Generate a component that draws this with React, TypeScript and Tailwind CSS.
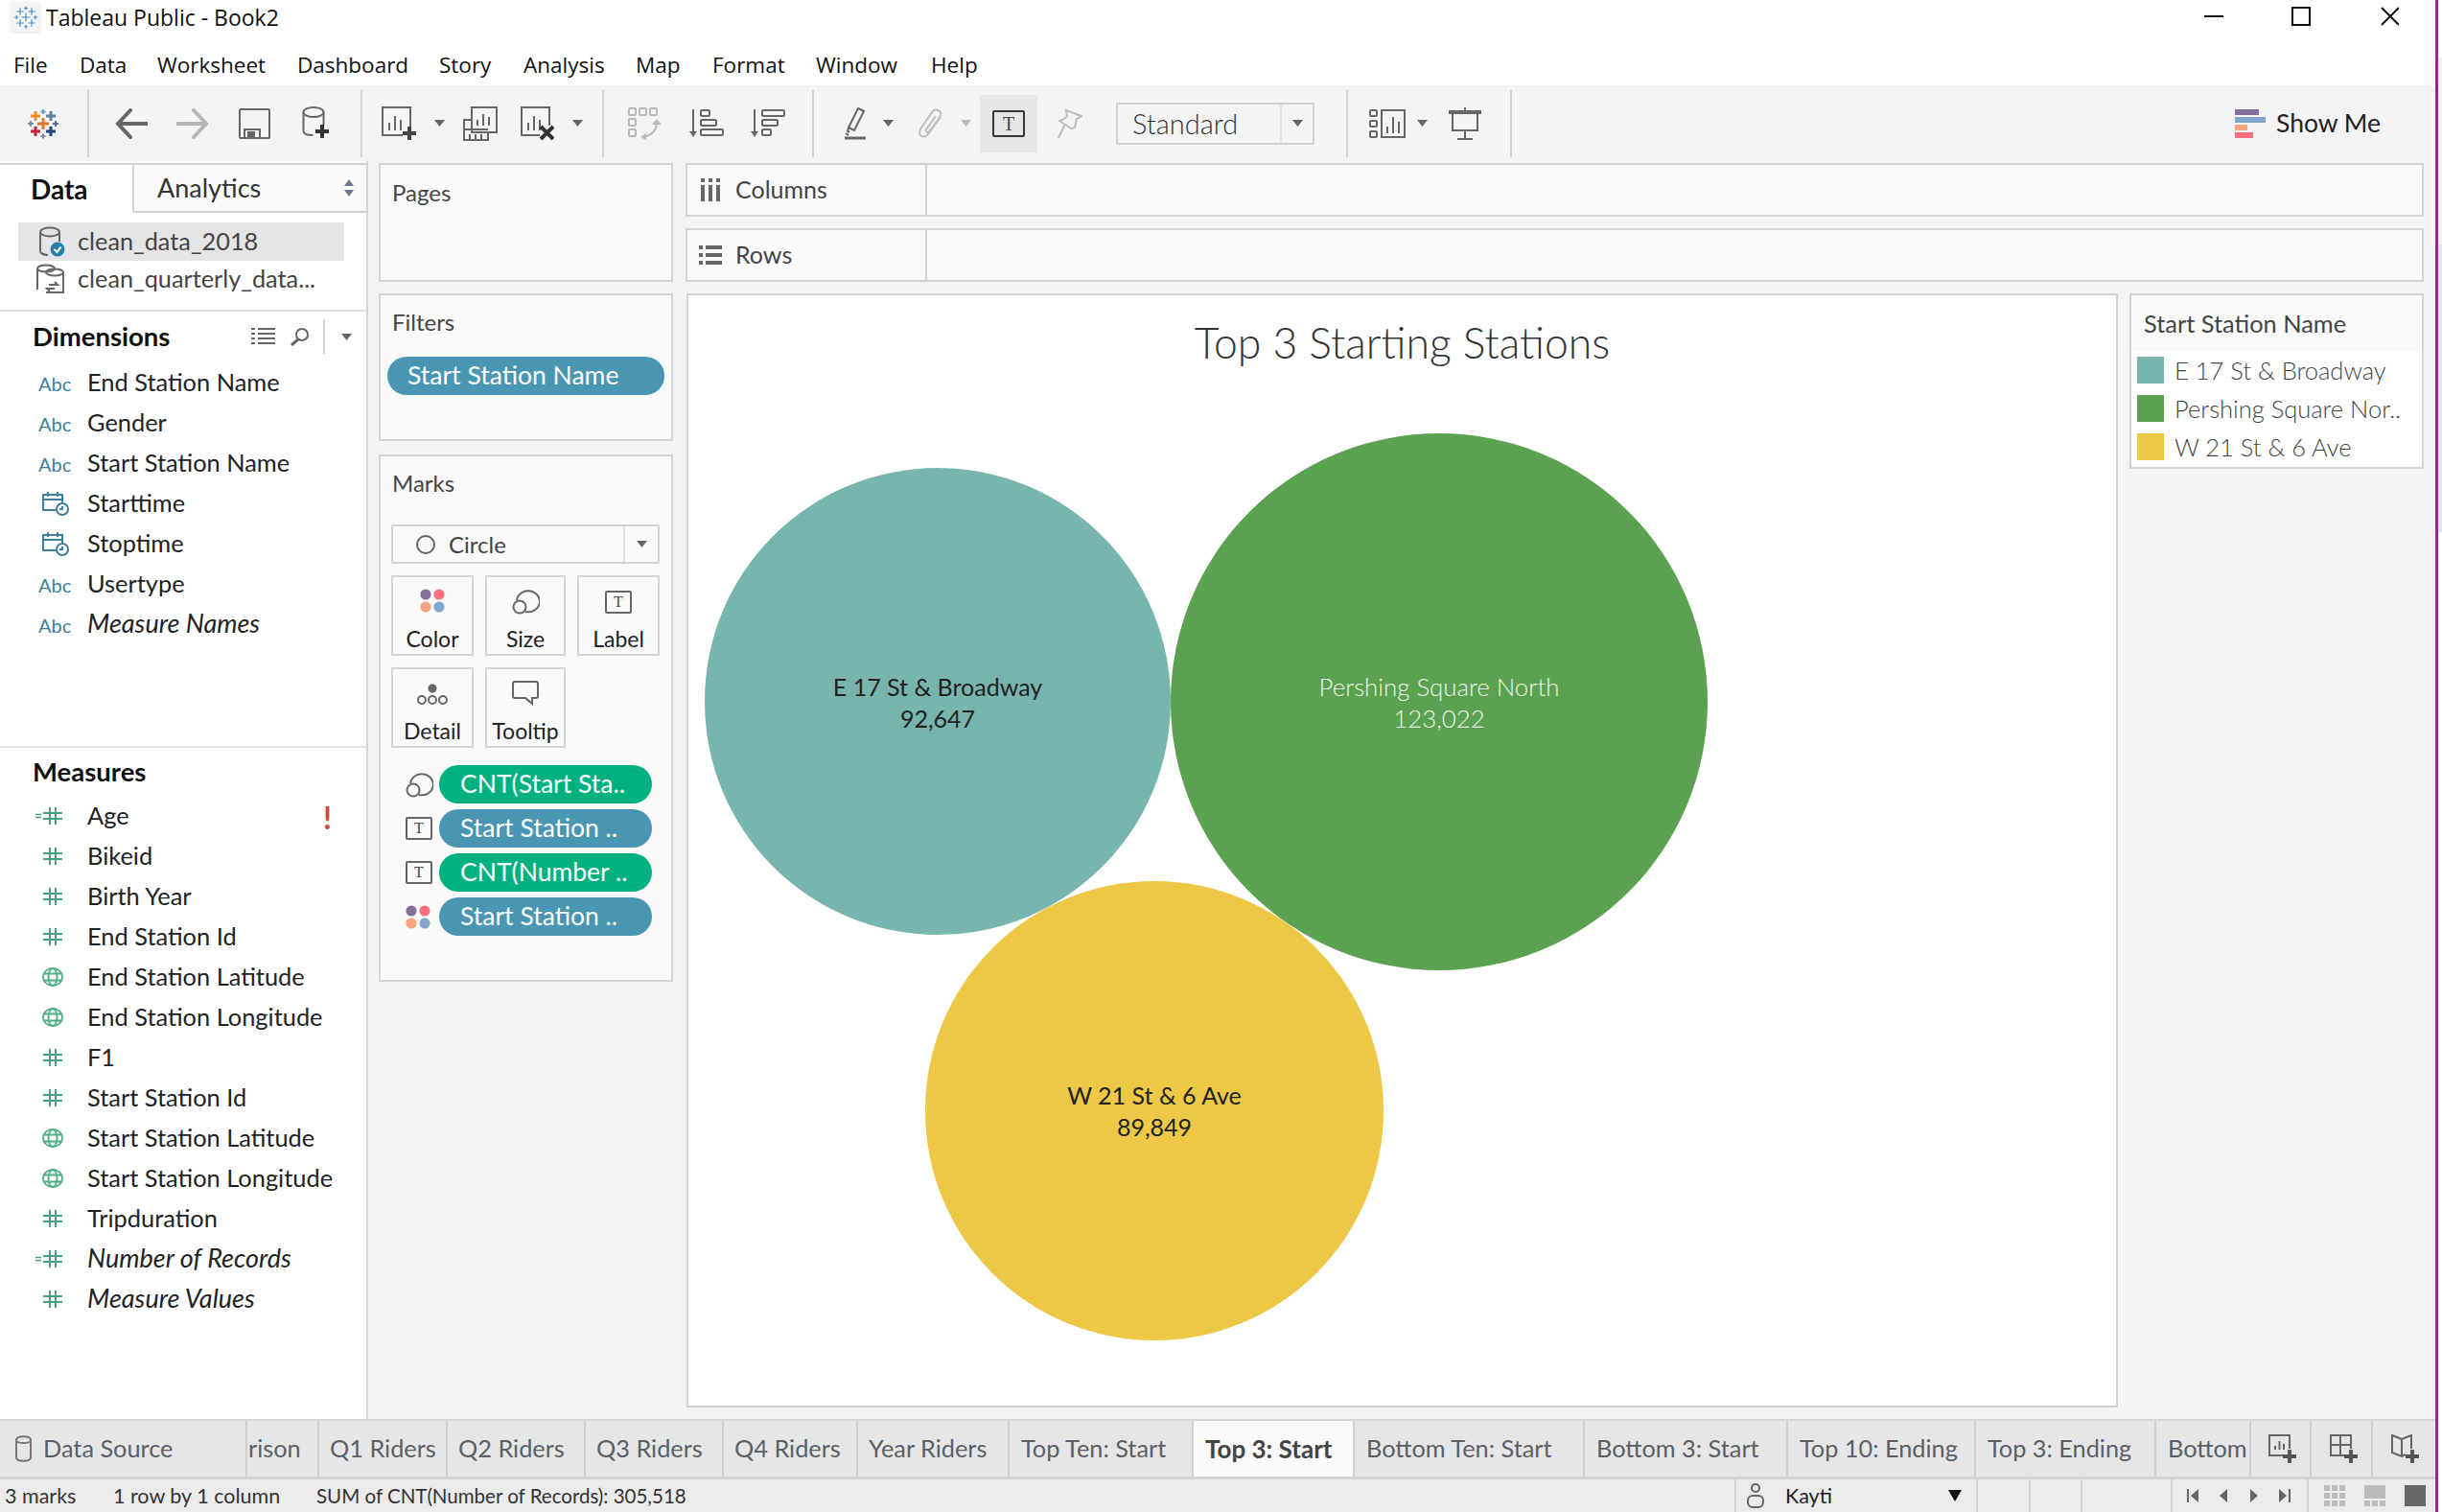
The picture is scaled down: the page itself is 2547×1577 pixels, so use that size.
import React from "react";

// Toolbar icons
const Sep = ({ className }: { className: string }) => (
  <div className={`w-[2px] h-[70px] bg-[#d4d4d4] shrink-0 ${className}`} />
);

const Caret = ({ className, light }: { className: string; light?: boolean }) => (
  <svg className={`shrink-0 ${className}`} width="11" height="7" viewBox="0 0 11 7">
    <path d="M0 0h11L5.5 7z" fill={light ? "#b9b9b9" : "#666"} />
  </svg>
);

const Plus = ({ x, y, s = 14, w = 4, color = "#555" }: { x: number; y: number; s?: number; w?: number; color?: string }) => (
  <path d={`M${x - s / 2} ${y}h${s}M${x} ${y - s / 2}v${s}`} stroke={color} strokeWidth={w} fill="none" />
);

const TableauLogo = ({ className, mono }: { className: string; mono?: boolean }) => {
  const crosses: [number, number, number, number, string][] = [
    [16, 16, 12, 3, "#e8762d"],
    [16, 3.5, 5, 2, "#6f9fb3"],
    [8, 8, 10, 3, "#eb912b"],
    [24, 8, 10, 3, "#5b879b"],
    [3, 16, 6, 2, "#7099a6"],
    [29, 16, 6, 2, "#59629b"],
    [8, 24, 10, 3, "#c72035"],
    [24, 24, 10, 3, "#1f447a"],
    [16, 29, 5, 2, "#7e8faf"],
  ];
  return (
    <svg className={`shrink-0 ${className}`} viewBox="0 0 32 32">
      {crosses.map(([x, y, s, w, c], i) => (
        <path key={i} d={`M${x - s / 2} ${y}h${s}M${x} ${y - s / 2}v${s}`} stroke={mono ? "#4a90c2" : c} strokeWidth={mono ? 1.6 : w} fill="none" />
      ))}
    </svg>
  );
};

const SheetBars = ({ x, y }: { x: number; y: number }) => (
  <path d={`M${x} ${y + 17}v-8M${x + 6} ${y + 17}v-15M${x + 12} ${y + 17}v-11`} stroke="#666" strokeWidth="2" fill="none" />
);

const TBox = ({ className }: { className: string }) => (
  <div className={`border-2 border-[#666] rounded-[2px] flex items-center justify-center text-[#444] [font-family:'Liberation_Serif',serif] leading-none shrink-0 ${className}`}>
    T
  </div>
);

const SizeIcon = ({ className }: { className: string }) => (
  <svg className={`shrink-0 ${className}`} width="29" height="27" viewBox="0 0 29 27" fill="none" stroke="#666" strokeWidth="2">
    <path d="M5 12a12 11 0 1 1 9 12" />
    <circle cx="8" cy="19" r="6.5" />
  </svg>
);

const ColorDots = ({ className }: { className: string }) => (
  <svg className={`shrink-0 ${className}`} width="26" height="25" viewBox="0 0 26 25">
    <circle cx="6" cy="6" r="5.6" fill="#84709a" />
    <circle cx="20" cy="6" r="5.6" fill="#f76e7e" />
    <circle cx="6" cy="19" r="5.6" fill="#f4a57f" />
    <circle cx="20" cy="19" r="5.6" fill="#82a5ce" />
  </svg>
);

const FieldIcon = ({ type }: { type: string }) => {
  if (type === "abc")
    return <span className="ml-[40px] mt-[4px] text-[20px] text-[#3d7f9e] leading-none">Abc</span>;
  if (type === "date")
    return (
      <svg className="ml-[44px] mt-[2px]" width="29" height="26" viewBox="0 0 29 26" fill="none" stroke="#3d7f9e" strokeWidth="2">
        <path d="M15 20H1V4h20v8M1 9h20M6 1v5M16 1v5" />
        <circle cx="21" cy="19" r="6" fill="#fff" />
        <path d="M21 16v3h-3" />
      </svg>
    );
  if (type === "globe")
    return (
      <svg className="ml-[44px] mt-[2px]" width="22" height="20" viewBox="0 0 22 20" fill="none" stroke="#4fae88" strokeWidth="1.8">
        <ellipse cx="11" cy="10" rx="10" ry="9" />
        <ellipse cx="11" cy="10" rx="4.5" ry="9" />
        <path d="M2 6.5h18M2 13.5h18" />
      </svg>
    );
  if (type === "calc")
    return (
      <svg className="ml-[37px] mt-[2px]" width="28" height="18" viewBox="0 0 28 18" fill="none" stroke="#4a9f80" strokeWidth="2">
        <path d="M0 7.5h6M0 10.5h6" strokeWidth="1.5" />
        <path d="M15 0v18M21 0v18M8 6h20M8 12h20" />
      </svg>
    );
  return (
    <svg className="ml-[45px] mt-[2px]" width="20" height="18" viewBox="0 0 20 18" fill="none" stroke="#4a9f80" strokeWidth="2">
      <path d="M7 0v18M13 0v18M0 6h20M0 12h20" />
    </svg>
  );
};

const dimensions = [
  { name: "End Station Name", type: "abc" },
  { name: "Gender", type: "abc" },
  { name: "Start Station Name", type: "abc" },
  { name: "Starttime", type: "date" },
  { name: "Stoptime", type: "date" },
  { name: "Usertype", type: "abc" },
  { name: "Measure Names", type: "abc", italic: true },
];

const measures = [
  { name: "Age", type: "calc", warn: true },
  { name: "Bikeid", type: "hash" },
  { name: "Birth Year", type: "hash" },
  { name: "End Station Id", type: "hash" },
  { name: "End Station Latitude", type: "globe" },
  { name: "End Station Longitude", type: "globe" },
  { name: "F1", type: "hash" },
  { name: "Start Station Id", type: "hash" },
  { name: "Start Station Latitude", type: "globe" },
  { name: "Start Station Longitude", type: "globe" },
  { name: "Tripduration", type: "hash" },
  { name: "Number of Records", type: "calc", italic: true },
  { name: "Measure Values", type: "hash", italic: true },
];

const FieldRow = ({ field }: { field: { name: string; type: string; italic?: boolean; warn?: boolean } }) => (
  <div className="relative h-[42px] flex items-center text-[25.4px] text-[#222]">
    <div className="w-[91px] shrink-0 flex items-center">
      <FieldIcon type={field.type} />
    </div>
    <span className={field.italic ? "italic text-[27px]" : ""}>{field.name}</span>
    {field.warn && <span className="absolute left-[337px] top-[0px] text-[32px] font-bold text-[#d2483c]">!</span>}
  </div>
);

const menus = [
  { label: "File", className: "w-[69px]" },
  { label: "Data", className: "w-[81px]" },
  { label: "Worksheet", className: "w-[146px]" },
  { label: "Dashboard", className: "w-[148px]" },
  { label: "Story", className: "w-[88px]" },
  { label: "Analysis", className: "w-[117px]" },
  { label: "Map", className: "w-[80px]" },
  { label: "Format", className: "w-[108px]" },
  { label: "Window", className: "w-[120px]" },
  { label: "Help", className: "w-[60px]" },
];

const tabs = [
  { label: "rison", className: "w-[75px] pl-[1px]" },
  { label: "Q1 Riders", className: "w-[134px] pl-[11px]" },
  { label: "Q2 Riders", className: "w-[144px] pl-[11px]" },
  { label: "Q3 Riders", className: "w-[144px] pl-[11px]" },
  { label: "Q4 Riders", className: "w-[140px] pl-[11px]" },
  { label: "Year Riders", className: "w-[158px] pl-[11px]" },
  { label: "Top Ten: Start", className: "w-[192px] pl-[12px]" },
  { label: "Top 3: Start", className: "w-[168px] pl-[12px] bg-[#fafafa] font-bold text-[#444] text-[26px]" },
  { label: "Bottom Ten: Start", className: "w-[240px] pl-[12px]" },
  { label: "Bottom 3: Start", className: "w-[212px] pl-[12px]" },
  { label: "Top 10: Ending", className: "w-[196px] pl-[12px]" },
  { label: "Top 3: Ending", className: "w-[188px] pl-[12px]" },
  { label: "Bottom", className: "w-[99px] pl-[12px]" },
];

const MarkCard = ({ label, className, children }: { label: string; className: string; children: React.ReactNode }) => (
  <div className={`h-[84px] border-2 border-[#d4d4d4] flex flex-col items-center text-[23px] text-[#222] ${className}`}>
    <div className="h-[40px] mt-[12px] flex items-start justify-center">{children}</div>
    <span className="leading-[24px]">{label}</span>
  </div>
);

const MarkPill = ({ icon, label, color }: { icon: React.ReactNode; label: string; color: string }) => (
  <div className="h-[40px] flex items-center">
    <div className="w-[50px] pl-[15px] flex items-center">{icon}</div>
    <div className={`w-[222px] h-[40px] rounded-full pl-[22px] flex items-center text-white text-[26.5px] whitespace-nowrap ${color}`}>{label}</div>
  </div>
);

export default function App() {
  return (
    <div className="w-[2547px] h-[1577px] flex overflow-hidden bg-white [font-family:Lato,sans-serif]">
      <div className="w-[2540px] h-full flex flex-col shrink-0">
        {/* Title bar */}
        <div className="h-[45px] flex items-start pt-[2px] [font-family:'Open_Sans',sans-serif] text-[23px] leading-[30px] text-[#111]">
          <div className="ml-[11px] w-[31px] h-[31px] bg-[#f4f4f4] shadow-sm flex items-center justify-center">
            <TableauLogo className="w-[24px] h-[24px]" mono />
          </div>
          <span className="ml-[6px] pt-[1px]">Tableau Public - Book2</span>
          <svg className="ml-auto mr-[38px] mt-[4px]" width="203" height="22" viewBox="0 0 203 22" fill="none" stroke="#111" strokeWidth="2">
            <path d="M0 11h20" />
            <rect x="92" y="2" width="18" height="18" />
            <path d="M185 2l18 18M203 2l-18 18" />
          </svg>
        </div>

        {/* Menu */}
        <div className="h-[44px] flex items-center pl-[14px] pt-[2px] [font-family:'Open_Sans',sans-serif] text-[22.5px] text-[#111]">
          {menus.map((m) => (
            <span key={m.label} className={m.className}>{m.label}</span>
          ))}
        </div>

        {/* Toolbar */}
        <div className="h-[79px] bg-[#f4f4f4] flex items-center">
          <TableauLogo className="ml-[29px] w-[32px] h-[32px]" />
          <Sep className="ml-[30px]" />
          <svg className="ml-[27px] shrink-0" width="34" height="32" viewBox="0 0 34 32" fill="none" stroke="#666" strokeWidth="4" strokeLinecap="round">
            <path d="M33 16H3M16 2L3 16l13 14" />
          </svg>
          <svg className="ml-[30px] shrink-0" width="34" height="32" viewBox="0 0 34 32" fill="none" stroke="#b7b7b7" strokeWidth="4" strokeLinecap="round">
            <path d="M1 16h30M18 2l13 14-13 14" />
          </svg>
          <svg className="ml-[31px] shrink-0" width="33" height="32" viewBox="0 0 33 32" fill="none" stroke="#666" strokeWidth="2">
            <rect x="1" y="1" width="31" height="30" rx="1" />
            <path d="M6 31V22h16v9" />
            <rect x="10" y="25" width="6" height="6" fill="#666" />
          </svg>
          <svg className="ml-[33px] shrink-0" width="29" height="35" viewBox="0 0 29 35" fill="none" stroke="#666" strokeWidth="2">
            <ellipse cx="12" cy="6" rx="10.5" ry="5" />
            <path d="M1.5 6v20c0 3 4 4 10 4M22.5 6v14" />
            <Plus x={21} y={26} s={14} w={4} color="#333" />
          </svg>
          <Sep className="ml-[32px]" />
          <svg className="ml-[20px] shrink-0" width="37" height="36" viewBox="0 0 37 36" fill="none" stroke="#666" strokeWidth="2">
            <path d="M22 30H1V1h29v21" />
            <SheetBars x={8} y={8} />
            <Plus x={29} y={28} s={14} w={4} color="#444" />
          </svg>
          <Caret className="ml-[18px]" />
          <svg className="ml-[19px] shrink-0" width="36" height="36" viewBox="0 0 36 36" fill="none" stroke="#666" strokeWidth="2">
            <rect x="9" y="1" width="26" height="26" />
            <path d="M9 14H1v21h25v-8M1 24h25" />
            <path d="M15 20v-6M21 20V8M27 20V11M7 29v5M13 29v5M19 29v5" />
          </svg>
          <svg className="ml-[24px] shrink-0" width="37" height="36" viewBox="0 0 37 36" fill="none" stroke="#666" strokeWidth="2">
            <path d="M20 30H1V1h29v19" />
            <SheetBars x={8} y={8} />
            <path d="M21 21l13 13M34 21L21 34" stroke="#333" strokeWidth="4" />
          </svg>
          <Caret className="ml-[17px]" />
          <Sep className="ml-[20px]" />
          <svg className="ml-[25px] shrink-0" width="36" height="34" viewBox="0 0 36 34" fill="none" stroke="#b9b9b9" strokeWidth="2">
            <rect x="1" y="1" width="7" height="7" rx="1" />
            <rect x="12" y="1" width="7" height="7" rx="1" />
            <rect x="23" y="1" width="7" height="7" rx="1" />
            <rect x="1" y="12" width="7" height="7" rx="1" />
            <rect x="1" y="23" width="7" height="7" rx="1" />
            <path d="M30 17c0 6-5 12-14 14" />
            <path d="M25 18l5-6 5 6zM19 27l-6 4 6 3z" fill="#b9b9b9" stroke="none" />
          </svg>
          <svg className="ml-[28px] shrink-0" width="36" height="30" viewBox="0 0 36 30" fill="none" stroke="#666" strokeWidth="2">
            <path d="M4 0v26" />
            <path d="M0 23h8l-4 6z" fill="#666" stroke="none" />
            <rect x="12" y="1" width="9" height="6" rx="1" />
            <rect x="12" y="11" width="16" height="6" rx="1" />
            <rect x="12" y="21" width="23" height="6" rx="1" />
          </svg>
          <svg className="ml-[28px] shrink-0" width="36" height="30" viewBox="0 0 36 30" fill="none" stroke="#666" strokeWidth="2">
            <path d="M4 0v26" />
            <path d="M0 23h8l-4 6z" fill="#666" stroke="none" />
            <rect x="12" y="1" width="23" height="6" rx="1" />
            <rect x="12" y="11" width="16" height="6" rx="1" />
            <rect x="12" y="21" width="9" height="6" rx="1" />
          </svg>
          <Sep className="ml-[28px]" />
          <svg className="ml-[32px] shrink-0" width="23" height="34" viewBox="0 0 23 34" fill="none" stroke="#666" strokeWidth="2">
            <path d="M14 1l6 3-10 20-6-3zM4 21l-1 4 2 1" />
            <path d="M1 27l3 2" />
            <path d="M0 32h22" strokeWidth="3" />
          </svg>
          <Caret className="ml-[17px]" />
          <svg className="ml-[25px] shrink-0" width="27" height="32" viewBox="0 0 27 32" fill="none" stroke="#bdbdbd" strokeWidth="2">
            <path d="M24 9L11 27c-3 4-9 3-9-2 0-2 1-3 2-5L16 3c3-3 9-1 8 4-1 3-10 15-12 17-2 2-4 0-3-2L19 8" />
          </svg>
          <Caret className="ml-[18px]" light />
          <div className="ml-[9px] w-[60px] h-[60px] bg-[#e6e6e6] flex items-center justify-center shrink-0">
            <div className="w-[34px] h-[28px] border-2 border-[#333] rounded-[2px] flex items-center justify-center [font-family:'Liberation_Serif',serif] text-[20px] text-[#444] leading-none">T</div>
          </div>
          <svg className="ml-[21px] shrink-0" width="26" height="32" viewBox="0 0 26 32" fill="none" stroke="#bdbdbd" strokeWidth="2">
            <path d="M9 2l16 6-5 3-2 9-4 1L2 13l5-2 3-3zM7 18L1 31" />
          </svg>
          <div className="ml-[35px] w-[207px] h-[44px] border-2 border-[#d0d0d0] rounded-[2px] flex items-center shrink-0">
            <span className="w-[169px] pl-[15px] text-[29px] text-[#333] font-light">Standard</span>
            <div className="w-[34px] h-full border-l-2 border-[#e2e2e2] flex items-center justify-center">
              <Caret className="" />
            </div>
          </div>
          <Sep className="ml-[33px]" />
          <svg className="ml-[22px] shrink-0" width="38" height="30" viewBox="0 0 38 30" fill="none" stroke="#666" strokeWidth="2">
            <rect x="1" y="1" width="7" height="6" rx="1" />
            <rect x="1" y="12" width="7" height="6" rx="1" />
            <rect x="1" y="23" width="7" height="6" rx="1" />
            <rect x="13" y="1" width="24" height="28" />
            <path d="M19 25v-7M25 25V8M31 25V13" />
          </svg>
          <Caret className="ml-[12px]" />
          <svg className="ml-[22px] shrink-0" width="34" height="34" viewBox="0 0 34 34" fill="none" stroke="#666" strokeWidth="2">
            <path d="M17 0v4M4 5v19h26V5M17 24v8M9 33h16" />
            <path d="M0 5h34" strokeWidth="4" />
          </svg>
          <Sep className="ml-[30px]" />
          <div className="ml-auto mr-[57px] flex items-center">
            <svg width="32" height="30" viewBox="0 0 32 30">
              <rect width="25" height="6" fill="#84709a" />
              <rect y="8" width="32" height="6" fill="#82a5ce" />
              <rect y="16" width="13" height="6" fill="#f4a57f" />
              <rect y="24" width="19" height="6" fill="#f76e7e" />
            </svg>
            <span className="ml-[11px] text-[26.5px] text-[#222]">Show Me</span>
          </div>
        </div>

        {/* Work area */}
        <div className="flex-1 flex bg-[#f4f4f4] min-h-0">
          {/* Data pane */}
          <div className="w-[384px] shrink-0 bg-white border-r-2 border-[#d4d4d4] flex flex-col">
            <div className="mt-[2px] h-[52px] flex shrink-0 border-t-2 border-[#d4d4d4]">
              <div className="w-[138px] pl-[32px] flex items-center text-[28px] font-bold text-[#111]">Data</div>
              <div className="flex-1 bg-[#fafafa] border-l-2 border-b-2 border-[#d4d4d4] pl-[24px] pr-[13px] flex items-center justify-between text-[27px] text-[#333]">
                <span>Analytics</span>
                <svg width="10" height="22" viewBox="0 0 10 22">
                  <path d="M5 2l5 7H0zM5 20L0 13h10z" fill="#667a8c" />
                </svg>
              </div>
            </div>
            <div className="mt-[10px] ml-[19px] w-[340px] h-[40px] bg-[#e5e5e5] flex items-center text-[25.3px] text-[#444]">
              <svg className="ml-[21px]" width="28" height="32" viewBox="0 0 28 32" fill="none" stroke="#666" strokeWidth="2">
                <ellipse cx="12" cy="6" rx="10" ry="4.5" />
                <path d="M2 6v20c0 2 3 4 8 4M22 6v10" />
                <circle cx="20" cy="24" r="7.5" fill="#2f7ea3" stroke="none" />
                <path d="M16.5 24l3 3 4-5.5" stroke="#fff" />
              </svg>
              <span className="ml-[13px]">clean_data_2018</span>
            </div>
            <div className="ml-[19px] h-[40px] pb-[2px] flex items-center text-[25.3px] text-[#444]">
              <svg className="ml-[18px]" width="31" height="32" viewBox="0 0 31 32" fill="none" stroke="#666" strokeWidth="2">
                <ellipse cx="11" cy="5" rx="9" ry="3.5" />
                <ellipse cx="20" cy="9" rx="9" ry="3.5" />
                <path d="M2 5v22M11 30h18V9M14 22h9l-3-3M20 26h-8l3 3" />
              </svg>
              <span className="ml-[13px] whitespace-nowrap">clean_quarterly_data...</span>
            </div>

            <div className="mt-[11px] border-t-2 border-[#e3e3e3] h-[54px] flex items-center shrink-0 relative">
              <span className="ml-[34px] text-[27.5px] font-bold text-[#111]">Dimensions</span>
              <svg className="ml-auto" width="25" height="18" viewBox="0 0 25 18" stroke="#666" strokeWidth="2">
                <path d="M0 1h4M7 1h18M0 6h4M7 6h18M0 11h4M7 11h18M0 16h4M7 16h18" />
              </svg>
              <svg className="ml-[16px]" width="19" height="19" viewBox="0 0 19 19" fill="none" stroke="#666" strokeWidth="2">
                <circle cx="12" cy="7" r="6" />
                <path d="M8 12l-7 6" strokeWidth="3" />
              </svg>
              <div className="ml-[15px] w-[2px] h-[36px] bg-[#d4d4d4]" />
              <Caret className="ml-[17px] mr-[15px]" />
            </div>
            {dimensions.map((f) => (
              <FieldRow key={f.name} field={f} />
            ))}
            <div className="mt-[107px] border-t-2 border-[#e3e3e3] h-[51px] flex items-center shrink-0">
              <span className="ml-[34px] text-[27.5px] font-bold text-[#111]">Measures</span>
            </div>
            {measures.map((f) => (
              <FieldRow key={f.name} field={f} />
            ))}
          </div>

          {/* Shelves column */}
          <div className="ml-[11px] w-[307px] shrink-0 flex flex-col pt-[2px] text-[24px] text-[#444]">
            <div className="h-[124px] border-2 border-[#d4d4d4] bg-[#fafafa] pl-[12px] pt-[11px]">Pages</div>
            <div className="mt-[12px] h-[154px] border-2 border-[#d4d4d4] bg-[#fafafa] px-[7px] pt-[10px]">
              <div className="pl-[5px]">Filters</div>
              <div className="mt-[18px] w-[289px] h-[40px] bg-[#4996b2] rounded-full text-white text-[26.5px] pl-[21px] flex items-center whitespace-nowrap">Start Station Name</div>
            </div>
            <div className="mt-[14px] h-[550px] border-2 border-[#d4d4d4] bg-[#fafafa] pl-[11px] pt-[10px]">
              <div className="pl-[1px]">Marks</div>
              <div className="mt-[25px] w-[280px] h-[41px] border-2 border-[#d4d4d4] rounded-[2px] flex items-center">
                <div className="ml-[24px] w-[20px] h-[20px] rounded-full border-2 border-[#666]" />
                <span className="ml-[14px] text-[24px]">Circle</span>
                <div className="ml-auto w-[36px] h-full border-l-2 border-[#e2e2e2] flex items-center justify-center">
                  <Caret className="" />
                </div>
              </div>
              <div className="mt-[12px] flex gap-[12px]">
                <MarkCard label="Color" className="w-[86px]"><ColorDots className="" /></MarkCard>
                <MarkCard label="Size" className="w-[84px]"><SizeIcon className="" /></MarkCard>
                <MarkCard label="Label" className="w-[86px]"><TBox className="w-[28px] h-[24px] text-[16px] mt-[2px]" /></MarkCard>
              </div>
              <div className="mt-[12px] flex gap-[12px]">
                <MarkCard label="Detail" className="w-[86px]">
                  <svg className="mt-[3px]" width="32" height="22" viewBox="0 0 32 22" fill="none" stroke="#666" strokeWidth="2">
                    <circle cx="16" cy="5" r="4.5" fill="#666" stroke="none" />
                    <circle cx="5" cy="17" r="4" />
                    <circle cx="16" cy="17" r="4" />
                    <circle cx="27" cy="17" r="4" />
                  </svg>
                </MarkCard>
                <MarkCard label="Tooltip" className="w-[84px]">
                  <svg className="mt-[0px]" width="28" height="26" viewBox="0 0 28 26" fill="none" stroke="#666" strokeWidth="2">
                    <path d="M3 1h22a2 2 0 0 1 2 2v13a2 2 0 0 1-2 2h-4v6l-7-6H3a2 2 0 0 1-2-2V3a2 2 0 0 1 2-2z" />
                  </svg>
                </MarkCard>
              </div>
              <div className="mt-[18px] flex flex-col gap-[6px]">
                <MarkPill icon={<SizeIcon className="" />} label="CNT(Start Sta.." color="bg-[#00b180]" />
                <MarkPill icon={<TBox className="w-[28px] h-[24px] text-[16px]" />} label="Start Station .." color="bg-[#4996b2]" />
                <MarkPill icon={<TBox className="w-[28px] h-[24px] text-[16px]" />} label="CNT(Number .." color="bg-[#00b180]" />
                <MarkPill icon={<ColorDots className="" />} label="Start Station .." color="bg-[#4996b2]" />
              </div>
            </div>
          </div>

          {/* View area */}
          <div className="ml-[13px] w-[1813px] shrink-0 flex flex-col pt-[2px] text-[#444]">
            <div className="h-[56px] border-2 border-[#d4d4d4] bg-[#fafafa] flex text-[25px]">
              <div className="w-[250px] border-r-2 border-[#d4d4d4] flex items-center pl-[14px]">
                <svg width="20" height="24" viewBox="0 0 20 24" fill="#666">
                  <rect width="4" height="4" />
                  <rect x="8" width="4" height="4" />
                  <rect x="16" width="4" height="4" />
                  <rect y="7" width="4" height="17" />
                  <rect x="8" y="7" width="4" height="17" />
                  <rect x="16" y="7" width="4" height="17" />
                </svg>
                <span className="ml-[16px]">Columns</span>
              </div>
            </div>
            <div className="mt-[12px] h-[56px] border-2 border-[#d4d4d4] bg-[#fafafa] flex text-[25px]">
              <div className="w-[250px] border-r-2 border-[#d4d4d4] flex items-center pl-[12px]">
                <svg width="24" height="20" viewBox="0 0 24 20" fill="#666">
                  <rect width="4" height="4" />
                  <rect y="8" width="4" height="4" />
                  <rect y="16" width="4" height="4" />
                  <rect x="7" width="17" height="4" />
                  <rect x="7" y="8" width="17" height="4" />
                  <rect x="7" y="16" width="17" height="4" />
                </svg>
                <span className="ml-[14px]">Rows</span>
              </div>
            </div>
            <div className="mt-[12px] flex items-start">
              {/* Canvas */}
              <div className="relative ml-[1px] w-[1493px] h-[1162px] border-2 border-[#d4d4d4] bg-white">
                <div className="mt-[25px] text-center text-[44.5px] font-light text-[#333] leading-[48px]">Top 3 Starting Stations</div>
                <div className="absolute left-[17px] top-[180px] w-[486px] h-[487px] pt-[2px] rounded-full bg-[#78b5ae] flex flex-col items-center justify-center text-[25px] leading-[33px] text-[#222]">
                  <span>E 17 St &amp; Broadway</span>
                  <span>92,647</span>
                </div>
                <div className="absolute left-[247px] top-[611px] w-[478px] h-[479px] rounded-full bg-[#ecc846] flex flex-col items-center justify-center text-[25px] leading-[33px] text-[#222]">
                  <span>W 21 St &amp; 6 Ave</span>
                  <span>89,849</span>
                </div>
                <div className="absolute left-[503px] top-[144px] w-[560px] h-[560px] pt-[2px] rounded-full bg-[#5aa250] flex flex-col items-center justify-center text-[25.8px] leading-[33px] text-[#eef5ea] font-light">
                  <span>Pershing Square North</span>
                  <span>123,022</span>
                </div>
              </div>
              {/* Legend */}
              <div className="ml-[12px] w-[307px] h-[183px] border-2 border-[#d4d4d4] bg-white flex flex-col">
                <div className="h-[58px] bg-[#fafafa] pl-[13px] flex items-center text-[25.4px] text-[#444]">Start Station Name</div>
                <div className="pt-[6px] pl-[6px] flex flex-col gap-[12px] text-[25.5px] text-[#444] font-light">
                  <div className="h-[28px] flex items-center"><div className="w-[28px] h-[28px] bg-[#78b5ae]" /><span className="ml-[11px] whitespace-nowrap">E 17 St &amp; Broadway</span></div>
                  <div className="h-[28px] flex items-center"><div className="w-[28px] h-[28px] bg-[#5aa250]" /><span className="ml-[11px] whitespace-nowrap">Pershing Square Nor..</span></div>
                  <div className="h-[28px] flex items-center"><div className="w-[28px] h-[28px] bg-[#ecc846]" /><span className="ml-[11px] whitespace-nowrap">W 21 St &amp; 6 Ave</span></div>
                </div>
              </div>
            </div>
          </div>
        </div>

        {/* Sheet tabs */}
        <div className="h-[63px] shrink-0 bg-[#e6e6e6] border-t-2 border-b-[3px] border-[#d4d4d4] flex text-[25.3px] text-[#5a5f66]">
          <div className="w-[258px] border-r-2 border-[#d0d0d0] flex items-center shrink-0">
            <svg className="ml-[16px]" width="17" height="28" viewBox="0 0 17 28" fill="none" stroke="#777" strokeWidth="2">
              <path d="M1 5c0-5 15-5 15 0v18c0 5-15 5-15 0zM1 5c0 4 15 4 15 0" />
            </svg>
            <span className="ml-[12px]">Data Source</span>
          </div>
          {tabs.map((t) => (
            <div key={t.label} className={`border-r-2 border-[#d0d0d0] flex items-center shrink-0 overflow-hidden whitespace-nowrap ${t.className}`}>
              {t.label}
            </div>
          ))}
          <div className="w-[63px] border-r-2 border-[#d0d0d0] flex items-center pl-[18px] shrink-0">
            <svg width="30" height="30" viewBox="0 0 30 30" fill="none" stroke="#666" strokeWidth="2">
              <path d="M15 22H1V1h21v14" />
              <path d="M7 16v-4M11.500 16V7M16 16v-6" />
              <Plus x={22} y={23} s={14} w={4} color="#555" />
            </svg>
          </div>
          <div className="w-[64px] border-r-2 border-[#d0d0d0] flex items-center pl-[19px] shrink-0">
            <svg width="30" height="30" viewBox="0 0 30 30" fill="none" stroke="#666" strokeWidth="2">
              <path d="M15 22H1V1h21v14M1 11h21M11 1v21" />
              <Plus x={22} y={23} s={14} w={4} color="#555" />
            </svg>
          </div>
          <div className="flex-1 flex items-center pl-[19px]">
            <svg width="30" height="30" viewBox="0 0 30 30" fill="none" stroke="#666" strokeWidth="2">
              <path d="M11 5L1 1v18l10 4 4-2M11 5l10-4v14M11 5v18" />
              <Plus x={22} y={23} s={14} w={4} color="#555" />
            </svg>
          </div>
        </div>

        {/* Status bar */}
        <div className="h-[34px] shrink-0 bg-[#ebebeb] flex items-center text-[21.5px] text-[#333]">
          <span className="w-[118px] pl-[5px] pt-[1px]">3 marks</span>
          <span className="w-[212px] pt-[1px]">1 row by 1 column</span>
          <span className="text-[20.5px] pt-[1px]">SUM of CNT(Number of Records): 305,518</span>
          <div className="ml-auto w-[731px] h-full flex">
            <div className="w-[252px] h-full border-l-2 border-[#d4d4d4] flex items-center">
              <svg className="ml-[10px]" width="20" height="26" viewBox="0 0 20 26" fill="none" stroke="#666" strokeWidth="2">
                <circle cx="10" cy="5" r="4" />
                <rect x="2" y="13" width="16" height="12" rx="5" />
              </svg>
              <span className="ml-[21px] text-[#222]">Kayti</span>
              <svg className="ml-auto mr-[15px]" width="14" height="12" viewBox="0 0 14 12">
                <path d="M0 0h14L7 12z" fill="#111" />
              </svg>
            </div>
            <div className="w-[55px] border-l-2 border-[#d4d4d4]" />
            <div className="w-[54px] border-l-2 border-[#d4d4d4]" />
            <div className="w-[94px] border-l-2 border-[#d4d4d4]" />
            <div className="w-[142px] border-l-2 border-[#d4d4d4] flex items-center">
              <svg className="ml-[15px]" width="110" height="14" viewBox="0 0 110 14" fill="#666">
                <path d="M0 0h2v14H0zM12 0v14L4 7zM42 0v14l-8-7zM66 0v14l8-7zM96 0v14l8-7zM106 0h2v14h-2z" />
              </svg>
            </div>
            <div className="flex-1 border-l-2 border-[#d4d4d4] flex items-center pl-[16px] gap-[20px]">
              <svg width="22" height="22" viewBox="0 0 22 22" fill="#bbb">
                {[0, 8, 16].map((y) =>
                  [0, 8, 16].map((x) => <rect key={`${x}-${y}`} x={x} y={y} width="6" height="6" />)
                )}
              </svg>
              <svg width="22" height="22" viewBox="0 0 22 22" fill="#bbb">
                <rect width="22" height="14" />
                <rect y="16" width="6" height="6" />
                <rect x="8" y="16" width="6" height="6" />
                <rect x="16" y="16" width="6" height="6" />
              </svg>
              <div className="w-[22px] h-[22px] bg-[#666]" />
            </div>
          </div>
        </div>
      </div>

      {/* Window edge */}
      <div className="w-[3px] h-full bg-[#a0229a] shrink-0" />
      <div className="w-[4px] h-full flex flex-col shrink-0">
        <div className="h-[60px] bg-white" />
        <div className="h-[195px] bg-[#f0f0f0]" />
        <div className="h-[300px] bg-[#dfe6ee]" />
        <div className="flex-1 bg-white" />
      </div>
    </div>
  );
}
